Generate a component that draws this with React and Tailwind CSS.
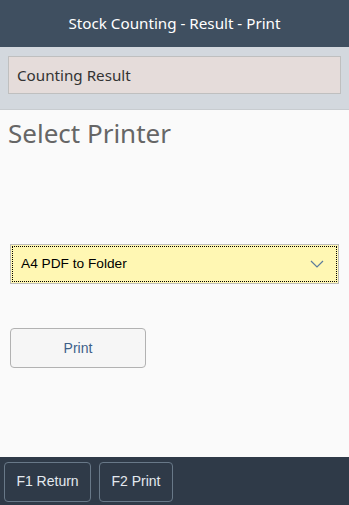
export default function App() {
  return (
    <div className="w-[349px] h-[505px] flex flex-col bg-[#fafafa] overflow-hidden">
      <div className="h-[47px] shrink-0 bg-[#3f4f60] flex items-center justify-center text-[15.2px] text-white font-['Noto_Sans',sans-serif]">
        Stock Counting - Result - Print
      </div>
      <div className="h-[63px] shrink-0 bg-[#d3d8de] px-[8px] pt-[9px] border-b border-[#c8ccd0]">
        <div className="h-[38px] bg-[#e5dcda] border border-[#bfbfbf] flex items-center px-[8px] text-[15.2px] text-[#333] font-['Noto_Sans',sans-serif]">
          Counting Result
        </div>
      </div>
      <div className="flex-1 flex flex-col px-[10px]">
        <div className="mt-[7px] -ml-[2px] text-[26px] leading-[32px] text-[#666] font-['Noto_Sans',sans-serif]">
          Select Printer
        </div>
        <div className="mt-[95px] h-[40px] w-[329px] border border-[#bdbdbd] bg-[#fff7b3] p-px">
          <div className="h-full border border-dotted border-black flex items-center justify-between pl-[8px] pr-[12px]">
            <span className="text-[13.7px] text-black font-['Liberation_Sans',Arial,sans-serif]">A4 PDF to Folder</span>
            <svg width="14" height="8" viewBox="0 0 14 8" fill="none">
              <path d="M1 1L7 7L13 1" stroke="#5b7b9c" strokeWidth="1.2" />
            </svg>
          </div>
        </div>
        <button className="mt-[44px] w-[136px] h-[40px] rounded-[4px] border border-[#b2b2b2] bg-[#f6f6f6] text-[14px] text-[#3d6089] font-['Liberation_Sans',Arial,sans-serif]">
          Print
        </button>
      </div>
      <div className="h-[48px] shrink-0 bg-[#2f3a48] flex items-center gap-[8px] px-[4px] pt-[1px]">
        <div className="h-[40px] w-[87px] rounded-[4px] border border-[#687888] flex items-center justify-center text-[14px] text-[#e3e9ef] font-['Liberation_Sans',Arial,sans-serif]">
          F1 Return
        </div>
        <div className="h-[40px] w-[74px] rounded-[4px] border border-[#687888] flex items-center justify-center text-[14px] text-[#e3e9ef] font-['Liberation_Sans',Arial,sans-serif]">
          F2 Print
        </div>
      </div>
    </div>
  );
}
